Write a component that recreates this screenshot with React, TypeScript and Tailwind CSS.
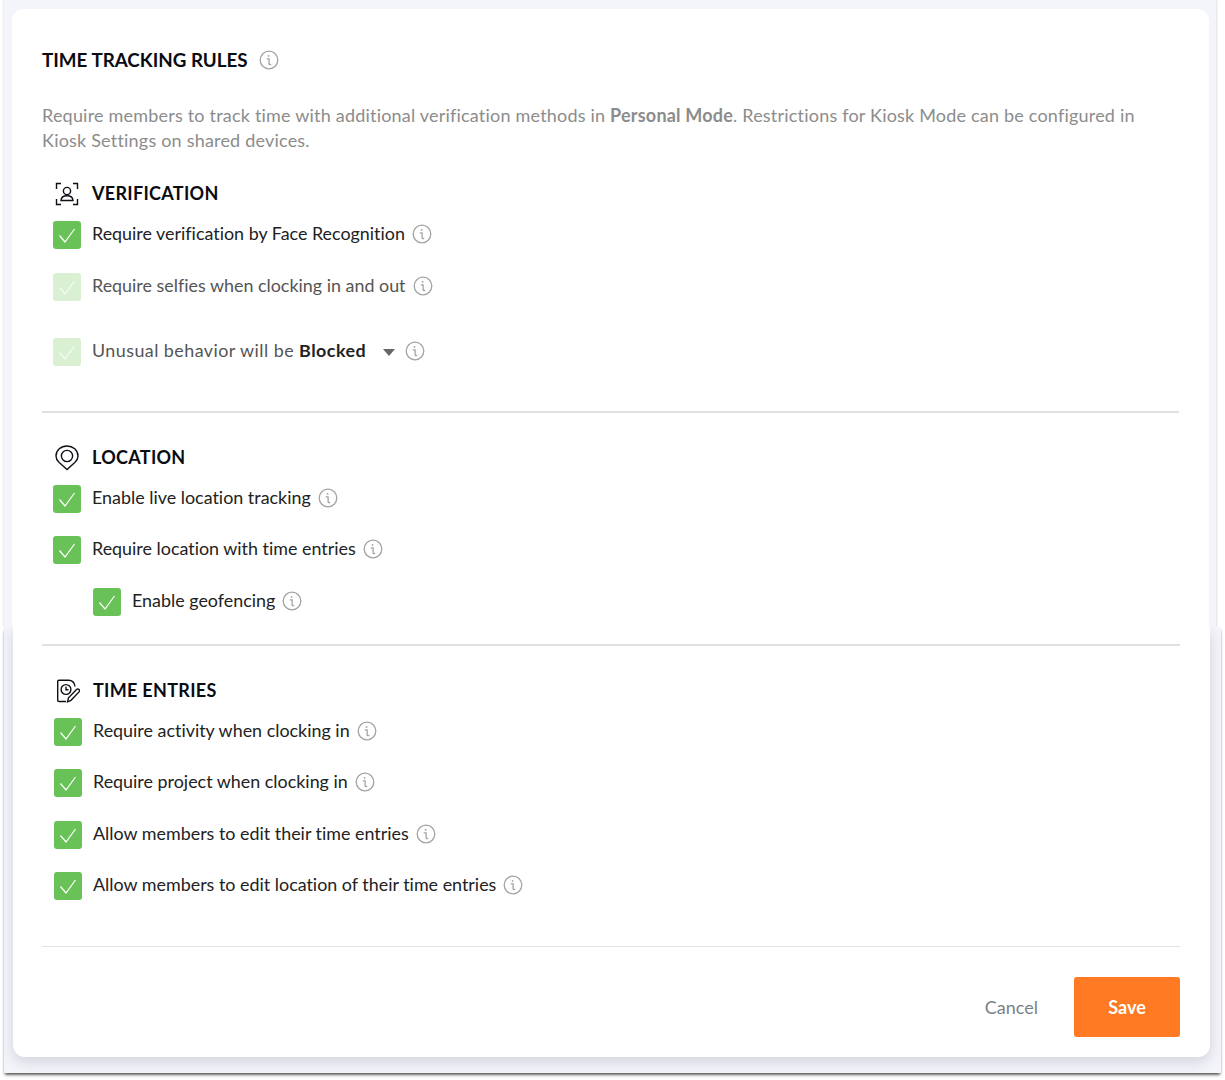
const fontStack = { fontFamily: 'Lato, "Noto Sans", sans-serif' }

function InfoIcon({ className = '' }: { className?: string }) {
  return (
    <svg className={`shrink-0 ${className}`} width="20" height="20" viewBox="0 0 20 20" fill="none" stroke="#a3a3a3" strokeWidth="1.3">
      <circle cx="10" cy="10" r="8.8" />
      <circle cx="9.6" cy="5.9" r="0.9" fill="#a3a3a3" stroke="none" />
      <path d="M8.2 8.8h1.9v4.6c0 1 .5 1.3 1.6 1.1" strokeLinecap="round" />
    </svg>
  )
}

function Check({ faded = false }: { faded?: boolean }) {
  return (
    <span className={`flex h-7 w-7 shrink-0 items-center justify-center rounded-[3px] ${faded ? 'bg-[#d9f0d3]' : 'bg-[#69c257]'}`}>
      <svg width="28" height="28" viewBox="0 0 28 28" fill="none" stroke="#fff" strokeWidth="1.2" opacity={faded ? 0.75 : 1}>
        <path d="M6.5 14.5l5.5 6.5L21.5 8" />
      </svg>
    </span>
  )
}

function Row({ label, faded = false, className = '', textClass = '', children }: { label: string; faded?: boolean; className?: string; textClass?: string; children?: React.ReactNode }) {
  return (
    <div className={`flex h-7 items-center ${className}`}>
      <Check faded={faded} />
      <span className={`ml-[11px] -translate-y-px whitespace-nowrap text-[17.9px] leading-none [font-variant-ligatures:none] ${faded ? 'text-[#555]' : 'text-[#222]'} ${textClass}`}>{label}{children}</span>
      <InfoIcon className="ml-[7px] -translate-y-px" />
    </div>
  )
}

function SectionTitle({ icon, title }: { icon: React.ReactNode; title: string }) {
  return (
    <div className="flex h-6 items-center">
      <span className="flex w-[26px] translate-x-px translate-y-px justify-center">{icon}</span>
      <h3 className="ml-[13px] text-[18px] font-bold leading-none tracking-[0.3px] text-[#0b0b12]">{title}</h3>
    </div>
  )
}

const FaceIcon = (
  <svg width="24" height="24" viewBox="0 0 24 24" fill="none" stroke="#0f0f18" strokeWidth="1.4">
    <path d="M6 1.5H1.5V7M18 1.5h4.5V7M1.5 17v5.5H6M22.5 17v5.5H18" />
    <circle cx="12" cy="9" r="3.6" />
    <path d="M6 18.5c.2-3 2.2-4.7 6-4.7s5.800 1.700 6 4.700z" />
  </svg>
)

const PinIcon = (
  <svg width="24" height="26" viewBox="0 0 24 26" fill="none" stroke="#0f0f18" strokeWidth="1.4">
    <path d="M12 24.500 4.200 17.600C2.200 15.700 1 13.300 1 11 1 5.200 6 1 12 1s11 4.200 11 10c0 2.300-1.200 4.700-3.200 6.600z" />
    <circle cx="12" cy="11" r="5.600" />
  </svg>
)

const EntryIcon = (
  <svg width="24" height="24" viewBox="0 0 24 24" fill="none" stroke="#0f0f18" strokeWidth="1.4">
    <path d="M10 22.500H3c-.8 0-1.300-.5-1.300-1.300V2.500c0-.8.5-1.300 1.300-1.300h9.500c3 0 6 2 6.500 6.300" />
    <circle cx="10" cy="10.500" r="4.900" />
    <path d="M10 7.800v2.900h2.500" />
    <path d="M11.500 22.800l1-4 8-8.300c.8-.7 1.800-.7 2.500 0s.6 1.700 0 2.400l-8 8.400z" />
  </svg>
)

export default function App() {
  return (
    <div className="h-[1080px] w-[1225px] overflow-hidden bg-white" style={fontStack}>
      {/* upper half of the settings card */}
      <div className="ml-1 h-[627px] w-[1212px] bg-[#f4f5fa] pl-2 pt-[9px] shadow-[1px_0_2px_rgba(0,0,0,0.12),-1px_0_2px_rgba(0,0,0,0.08)]">
        <div className="h-full w-[1197px] rounded-t-[12px] bg-white pl-[30px] pr-[30px] pt-[39px]">
          <div className="flex h-6 items-center">
            <h2 className="text-[18.8px] font-bold leading-none text-[#0b0b12]">TIME TRACKING RULES</h2>
            <InfoIcon className="ml-[11px]" />
          </div>
          <p className="mt-[31px] max-w-[1110px] text-[18px] leading-[25px] tracking-[0.2px] text-[#8c8c8c] [font-variant-ligatures:none]">
            Require members to track time with additional verification methods in <b className="font-bold">Personal Mode</b>. Restrictions for Kiosk Mode can be configured in Kiosk Settings on shared devices.
          </p>

          <div className="mt-[28px] pl-[11px]">
            <SectionTitle icon={FaceIcon} title="VERIFICATION" />
            <Row label="Require verification by Face Recognition" className="mt-4" />
            <Row label="Require selfies when clocking in and out" faded className="mt-6" />
            <Row label="Unusual behavior will be " faded textClass="tracking-[0.45px]" className="mt-[37px]">
              <b className="font-bold text-[#222]">Blocked</b>
              <span className="mb-[1px] ml-[17px] mr-[3px] inline-block border-x-[6.5px] border-t-[7px] border-x-transparent border-t-[#666]" />
            </Row>
          </div>

          <div className="mt-[45px] h-[2px] w-[1137px] bg-[#e0e0e0]" />

          <div className="mt-[32px] pl-[11px]">
            <SectionTitle icon={PinIcon} title="LOCATION" />
            <Row label="Enable live location tracking" className="mt-4" />
            <Row label="Require location with time entries" className="mt-[23px]" />
            <Row label="Enable geofencing" className="ml-10 mt-6" />
          </div>
        </div>
      </div>

      {/* lower half, sits slightly wider than the upper one */}
      <div className="ml-1 h-[446px] w-[1217px] overflow-hidden bg-[#f4f5fa] pl-[9px] shadow-[0_3px_3px_-1px_rgba(0,0,0,0.5),-1px_2px_2px_-1px_rgba(0,0,0,0.2),1px_2px_2px_-1px_rgba(0,0,0,0.2)]">
        <div className="h-[430px] w-[1197px] rounded-b-[12px] bg-white pl-[29px] pr-[30px] shadow-[0_5px_14px_rgba(40,40,70,0.16)]">
          <div className="pt-[17px]">
            <div className="h-[2px] w-[1138px] bg-[#e0e0e0]" />
          </div>
          <div className="mt-[32px] pl-3">
            <SectionTitle icon={EntryIcon} title="TIME ENTRIES" />
            <Row label="Require activity when clocking in" className="mt-4" />
            <Row label="Require project when clocking in" className="mt-[23px]" />
            <Row label="Allow members to edit their time entries" className="mt-6" />
            <Row label="Allow members to edit location of their time entries" className="mt-[23px]" />
          </div>
          <div className="mt-[46px] h-px w-[1138px] bg-[#e2e2e2]" />
          <div className="mt-[30px] flex w-[1138px] items-center justify-end">
            <button className="mr-9 text-[18px] text-[#7b8188]">Cancel</button>
            <button className="h-[60px] w-[106px] rounded-[3px] bg-[#ff7a22] text-[18px] font-bold text-white">Save</button>
          </div>
        </div>
      </div>
    </div>
  )
}
